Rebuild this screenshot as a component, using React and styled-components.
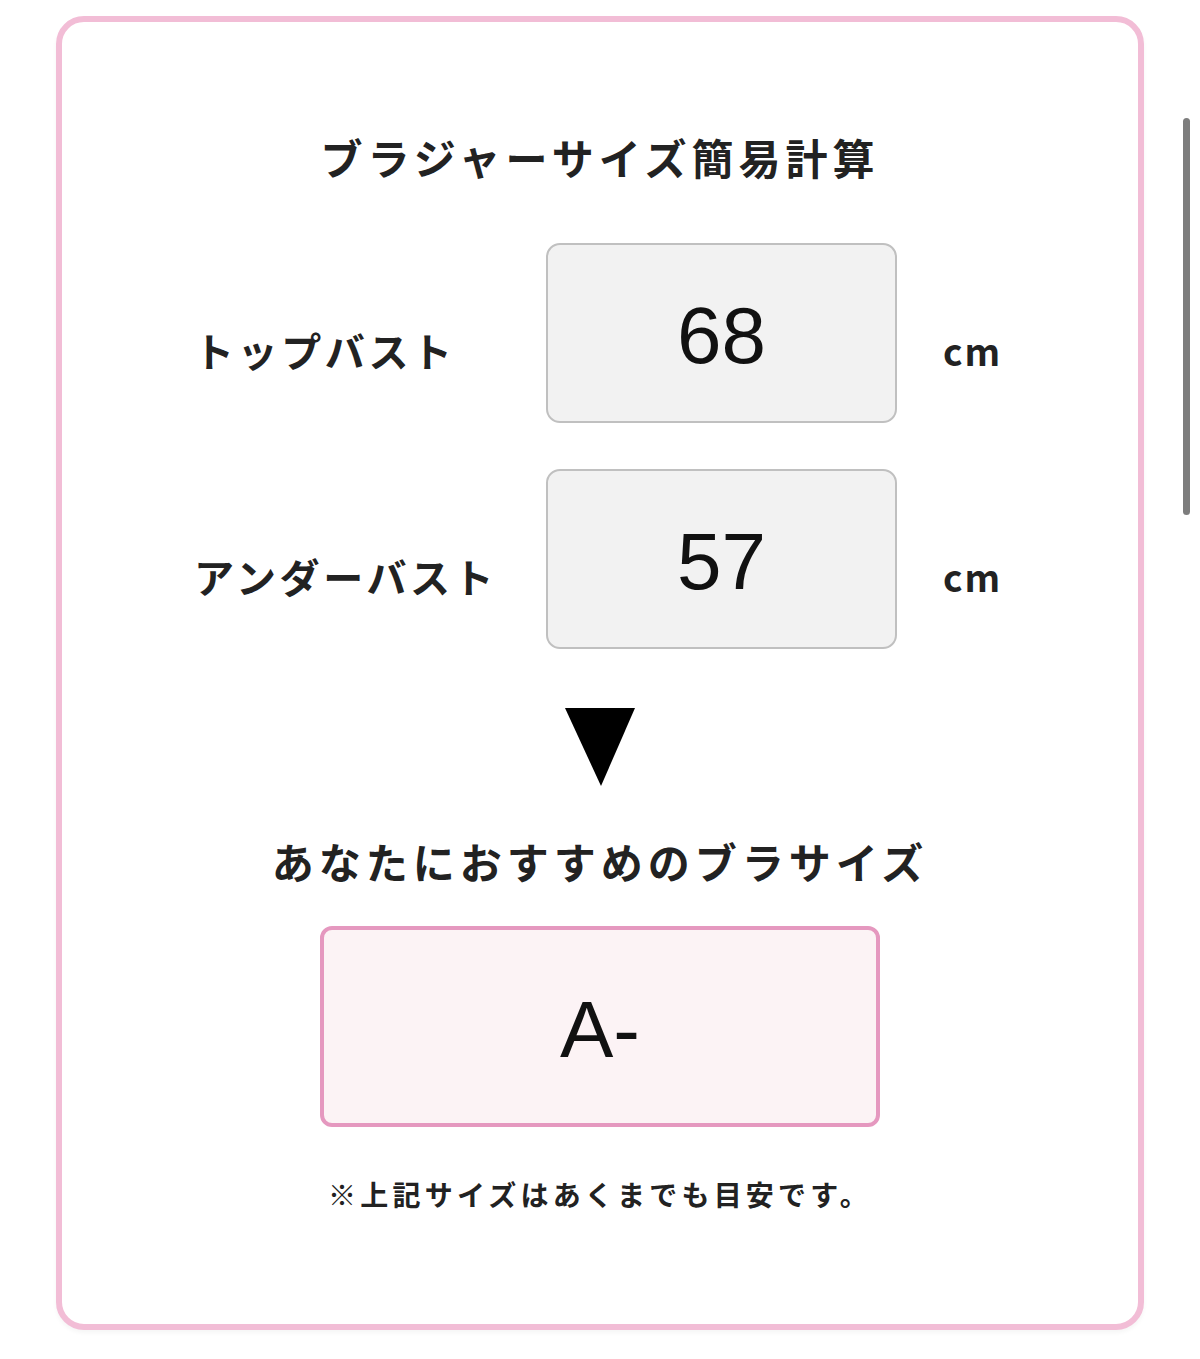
import React from "react";
import styled, { createGlobalStyle } from "styled-components";

const GlobalStyle = createGlobalStyle`
  html, body {
    margin: 0;
    padding: 0;
    background: #ffffff;
  }
  body {
    font-family: "Noto Sans CJK JP", "Noto Sans", sans-serif;
    color: #222222;
  }
`;

const Page = styled.div`
  position: relative;
  padding: 16px 56px 29px;
`;

const Card = styled.section`
  box-sizing: border-box;
  height: 1314px;
  border: 6px solid #f2bdd6;
  border-radius: 28px;
  background: #ffffff;
  display: flex;
  flex-direction: column;
  align-items: center;
  padding-top: 106px;
  box-shadow: 0 3px 4px rgba(0, 0, 0, 0.04);
`;

const Heading = styled.h2`
  margin: ${(p) => p.$top || 0}px 0 0;
  font-size: 42px;
  line-height: 58px;
  font-weight: 700;
  letter-spacing: 5px;
  color: #222222;
  text-align: center;
`;

const Form = styled.div`
  align-self: stretch;
  box-sizing: border-box;
  padding-left: 132px;
  margin-top: 57px;
  display: flex;
  flex-direction: column;
  gap: 46px;
`;

const Row = styled.div`
  display: grid;
  grid-template-columns: 352px 351px auto;
  align-items: center;
`;

const Label = styled.label`
  padding-top: 34px;
  font-size: 40px;
  line-height: 44px;
  font-weight: 700;
  letter-spacing: 3.6px;
  color: #222222;
  white-space: nowrap;
`;

const NumberBox = styled.div`
  box-sizing: border-box;
  width: 351px;
  height: 180px;
  border: 2px solid #c0c0c0;
  border-radius: 14px;
  background: #f2f2f2;
  display: flex;
  align-items: center;
  justify-content: center;
  padding-top: 6px;
  font-family: "Liberation Sans", Arial, sans-serif;
  font-size: 80px;
  color: #111111;
`;

const Unit = styled.span`
  margin-left: 46px;
  padding-top: 34px;
  font-family: "Noto Sans CJK JP", "Liberation Sans", sans-serif;
  font-size: 37px;
  line-height: 40px;
  font-weight: 700;
  letter-spacing: 2px;
  color: #222222;
`;

const Arrow = styled.svg`
  display: block;
  margin-top: 59px;
  width: 70px;
  height: 78px;
`;

const ResultBox = styled.div`
  box-sizing: border-box;
  margin-top: 36px;
  width: 560px;
  height: 201px;
  border: 4px solid #e598bf;
  border-radius: 12px;
  background: #fcf3f5;
  display: flex;
  align-items: center;
  justify-content: center;
  padding-top: 6px;
  font-family: "Liberation Sans", Arial, sans-serif;
  font-size: 80px;
  color: #111111;
`;

const Note = styled.p`
  margin: 49px 0 0;
  font-size: 28px;
  line-height: 36px;
  font-weight: 700;
  letter-spacing: 4.2px;
  color: #222222;
`;

const ScrollThumb = styled.div`
  position: absolute;
  left: 1183px;
  top: 118px;
  width: 7px;
  height: 397px;
  border-radius: 4px;
  background: #7d7d7d;
`;

const fields = [
  { label: "トップバスト", value: "68" },
  { label: "アンダーバスト", value: "57" },
];

export default function App() {
  return (
    <>
      <GlobalStyle />
      <Page>
        <Card>
          <Heading>ブラジャーサイズ簡易計算</Heading>
          <Form>
            {fields.map((f) => (
              <Row key={f.label}>
                <Label>{f.label}</Label>
                <NumberBox>{f.value}</NumberBox>
                <Unit>cm</Unit>
              </Row>
            ))}
          </Form>
          <Arrow viewBox="0 0 70 78" aria-hidden="true">
            <polygon points="0,0 70,0 36,78" fill="#000000" />
          </Arrow>
          <Heading $top={46}>あなたにおすすめのブラサイズ</Heading>
          <ResultBox>A-</ResultBox>
          <Note>※上記サイズはあくまでも目安です。</Note>
        </Card>
        <ScrollThumb />
      </Page>
    </>
  );
}
